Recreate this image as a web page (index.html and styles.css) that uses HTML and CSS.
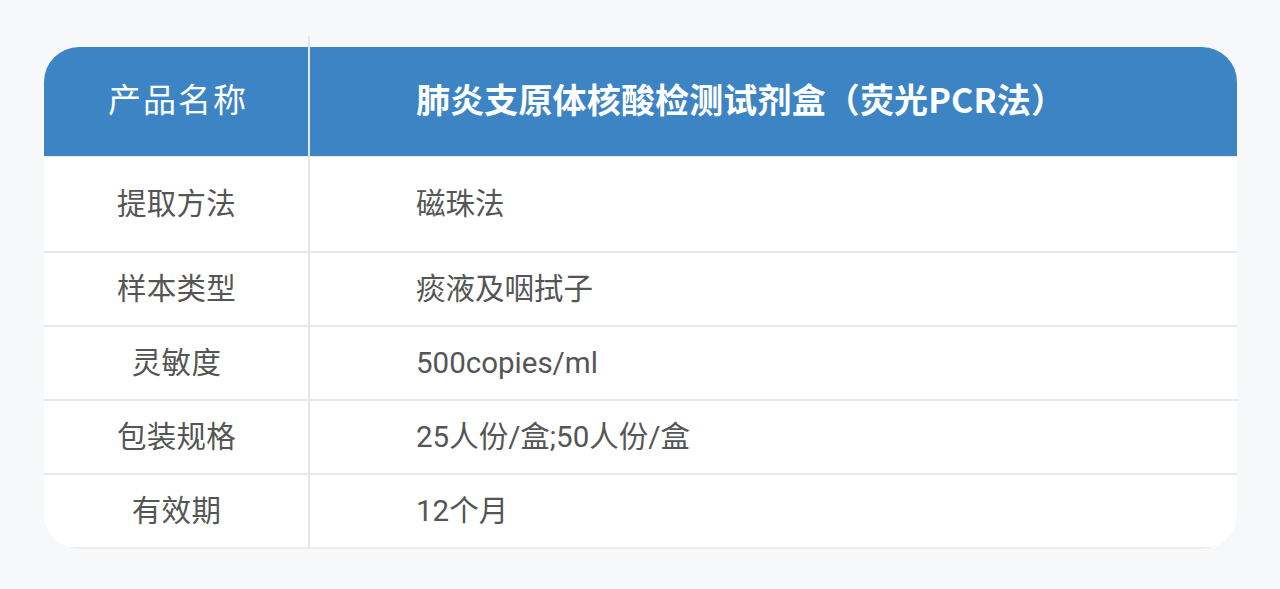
FILE: index.html
```html
<!DOCTYPE html>
<html lang="zh-CN">
<head>
<meta charset="utf-8">
<title>产品参数</title>
<link rel="stylesheet" href="styles.css">
</head>
<body>
<div class="page">
  <div class="wrap">
    <div class="card">
      <div class="row head">
        <div class="cell label">产品名称</div>
        <div class="cell value title">肺炎支原体核酸检测试剂盒（荧光PCR法）</div>
      </div>
      <div class="row first">
        <div class="cell label">提取方法</div>
        <div class="cell value">磁珠法</div>
      </div>
      <div class="row">
        <div class="cell label">样本类型</div>
        <div class="cell value">痰液及咽拭子</div>
      </div>
      <div class="row">
        <div class="cell label">灵敏度</div>
        <div class="cell value">500copies/ml</div>
      </div>
      <div class="row">
        <div class="cell label">包装规格</div>
        <div class="cell value">25人份/盒;50人份/盒</div>
      </div>
      <div class="row">
        <div class="cell label">有效期</div>
        <div class="cell value">12个月</div>
      </div>
    </div>
    <div class="divider"></div>
  </div>
</div>
</body>
</html>
```

FILE: styles.css
```css
* { box-sizing: border-box; }
html, body {
  margin: 0;
  padding: 0;
  background: #f7f8fa;
}
body {
  font-family: Roboto, "Noto Sans CJK SC", sans-serif;
  color: #555555;
}
.page {
  padding: 47px 43px 0 44px;
}
.wrap {
  position: relative;
}
.card {
  background: #ffffff;
  border-radius: 35px;
  overflow: hidden;
}
.row {
  display: flex;
  align-items: center;
  height: 74px;
  border-bottom: 2px solid #e8e8e8;
  padding-top: 2px;
}
.row:last-child {
  border-bottom-color: #eeeeee;
}
.row.head {
  height: 110px;
  background: #3d84c5;
  color: #ffffff;
  border-bottom: 1px solid #e6e9ee;
  padding-top: 0;
  padding-bottom: 5px;
}
.row.first {
  height: 96px;
}
.cell {
  font-size: 29.5px;
  line-height: 1.2;
}
.label {
  width: 265px;
  flex: 0 0 265px;
  text-align: center;
  letter-spacing: 0.3px;
}
.value {
  flex: 1;
  padding-left: 107px;
}
.head .label {
  font-family: "Noto Sans CJK SC", sans-serif;
  font-size: 33px;
  font-weight: 400;
  letter-spacing: 2px;
  padding-left: 3px;
}
.title {
  font-family: "Noto Sans CJK SC", sans-serif;
  font-size: 34px;
  font-weight: 700;
  letter-spacing: 0.15px;
}
.divider {
  position: absolute;
  left: 264px;
  top: -11px;
  bottom: -2px;
  width: 2px;
  background: #e6e6e6;
}
```
